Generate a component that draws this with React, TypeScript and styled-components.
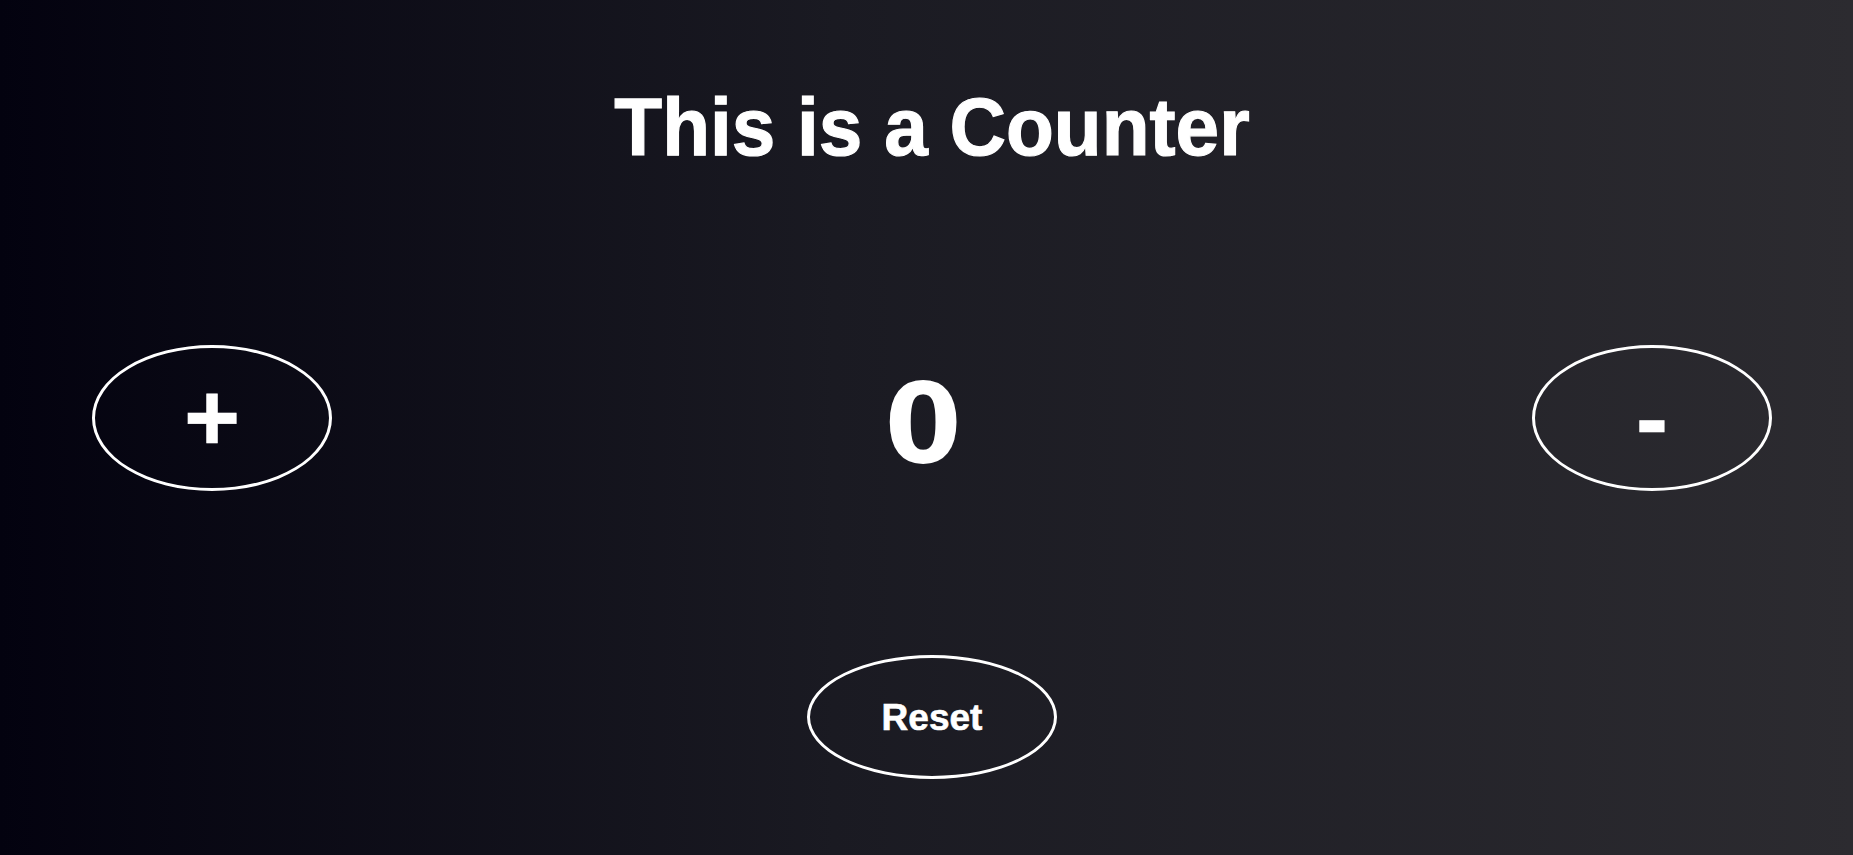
import React, { useState } from 'react'
import styled, { createGlobalStyle } from 'styled-components'

const GlobalStyle = createGlobalStyle`
    html, body {
        margin: 0;
        padding: 0;
        height: 100%;
    }
    body {
        background: linear-gradient(90deg, #03020f 0%, #1a1a22 45%, #2c2b30 100%);
        font-family: "Liberation Sans", Arial, sans-serif;
        color: white;
        overflow: hidden;
    }
`

const StyledPage = styled.div`
    min-height: 100vh;
    box-sizing: border-box;
    padding: 86px 81px 0 92px;
    display: flex;
    flex-direction: column;
`

const StyledTitle = styled.h1`
    margin: 0;
    font-size: 82px;
    line-height: 82px;
    font-weight: 700;
    -webkit-text-stroke: 1.2px white;
    text-align: center;
    transform: scaleX(0.955);
`

const StyledRow = styled.div`
    display: grid;
    grid-template-columns: 240px 1fr 240px;
    align-items: center;
    margin-top: 177px;
`

const StyledCount = styled.div`
    font-family: "DejaVu Sans", sans-serif;
    font-weight: 700;
    font-size: 111px;
    line-height: 134px;
    margin-top: 12px;
    text-align: center;
    padding-right: 18px;
`

const StyledRoundButton = styled.button<{ $width: number; $height: number; $size: number }>`
    width: ${(p) => p.$width}px;
    height: ${(p) => p.$height}px;
    box-sizing: border-box;
    border: 3px solid white;
    border-radius: 50%;
    background: transparent;
    color: white;
    font-family: "Liberation Sans", Arial, sans-serif;
    font-weight: 700;
    font-size: ${(p) => p.$size}px;
    line-height: 1;
    -webkit-text-stroke: 0.6px white;
    padding: 0;
    display: flex;
    align-items: center;
    justify-content: center;
    cursor: pointer;
`

const StyledResetRow = styled.div`
    display: flex;
    justify-content: center;
    margin-top: 164px;
`

const App = () => {
    const [count, setCount] = useState(0)
    return (
        <>
            <GlobalStyle />
            <StyledPage>
                <StyledTitle>This is a Counter</StyledTitle>
                <StyledRow>
                    <StyledRoundButton $width={240} $height={146} $size={96} onClick={() => setCount(count + 1)}>
                        +
                    </StyledRoundButton>
                    <StyledCount>{count}</StyledCount>
                    <StyledRoundButton $width={240} $height={146} $size={96} onClick={() => setCount(count - 1)}>
                        -
                    </StyledRoundButton>
                </StyledRow>
                <StyledResetRow>
                    <StyledRoundButton $width={250} $height={124} $size={37} onClick={() => setCount(0)}>
                        Reset
                    </StyledRoundButton>
                </StyledResetRow>
            </StyledPage>
        </>
    )
}

export default App
